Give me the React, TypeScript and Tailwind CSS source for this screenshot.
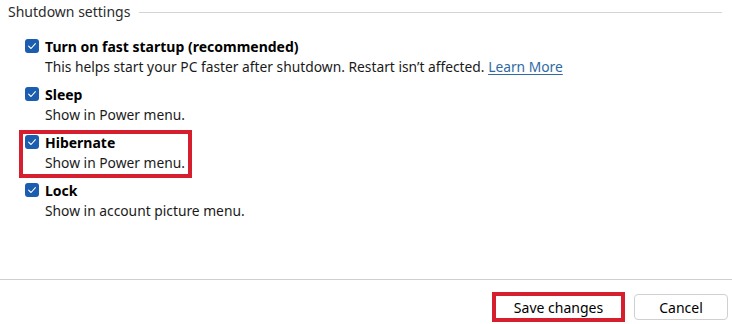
import React from "react";

const OPTIONS = [
  {
    title: "Turn on fast startup (recommended)",
    desc: "This helps start your PC faster after shutdown. Restart isn\u2019t affected.",
    link: true,
  },
  { title: "Sleep", desc: "Show in Power menu." },
  { title: "Hibernate", desc: "Show in Power menu.", marked: true },
  { title: "Lock", desc: "Show in account picture menu." },
];

function CheckBox() {
  return (
    <span className="flex h-[14px] w-[14px] shrink-0 items-center justify-center rounded-[3px] bg-[#1b5eaf]">
      <svg viewBox="0 0 14 14" className="h-[14px] w-[14px]" fill="none">
        <path d="M3.6 7.2 L6 9.5 L10.4 4.6" stroke="white" strokeWidth="1.1" strokeLinecap="round" strokeLinejoin="round" />
      </svg>
    </span>
  );
}

export default function App() {
  return (
    <div
      className="flex h-[324px] w-[732px] flex-col overflow-hidden bg-white text-[14px] text-[#1a1a1a]"
      style={{ fontFamily: '"Noto Sans", "Open Sans", sans-serif' }}
    >
      <div className="flex h-[24px] items-center pl-[8px] pr-[10px]">
        <span className="leading-none text-[#2b2b2b]">Shutdown settings</span>
        <span className="ml-[9px] h-px flex-1 bg-[#d4d4d4]" />
      </div>

      <div className="mt-[10px] flex flex-col pl-[19px]">
        {OPTIONS.map((o) => (
          <div
            key={o.title}
            className={`flex w-fit flex-col border-4 pl-[2px] pr-[3px] ${
              o.marked ? "border-[#d51f2f]" : "border-transparent"
            }`}
          >
            <div className="flex h-[16px] items-center gap-[6px]">
              <CheckBox />
              <span className="font-bold text-black">{o.title}</span>
            </div>
            <div className="flex h-[24px] items-center pt-[3px] pl-[20px] text-[13.8px]">
              <span>
                {o.desc}
                {o.link && (
                  <>
                    {" "}
                    <span className="text-[#2f6aa3] underline underline-offset-2">Learn More</span>
                  </>
                )}
              </span>
            </div>
          </div>
        ))}
      </div>

      <div className="mt-auto border-t border-[#cfcfcf]">
        <div className="flex items-center justify-end gap-[9px] pt-[12px] pr-[4px] pb-[2px]">
          <div className="border-4 border-[#d51f2f]">
            <button className="flex h-[22px] w-[125px] items-center justify-center bg-white text-[14px] text-black">
              Save changes
            </button>
          </div>
          <button className="flex h-[26px] w-[94px] items-center justify-center rounded-[4px] border border-[#d0d0d0] bg-white text-[14px] text-black">
            Cancel
          </button>
        </div>
      </div>
    </div>
  );
}
